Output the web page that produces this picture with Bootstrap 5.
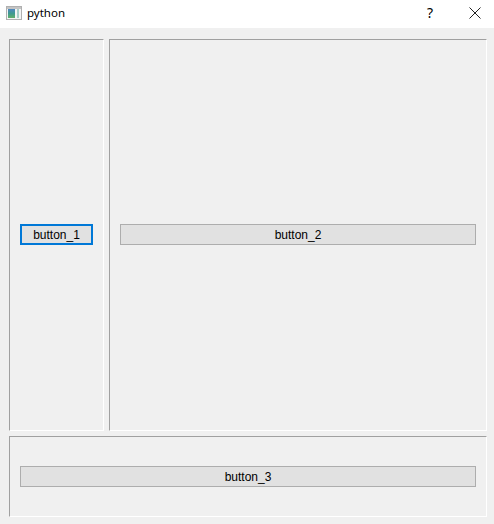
<!DOCTYPE html>
<html lang="en">
<head>
    <meta charset="UTF-8">
    <meta name="viewport" content="width=device-width, initial-scale=1.0">
    <title>python</title>
    <link href="https://cdn.jsdelivr.net/npm/bootstrap@5.3.0/dist/css/bootstrap.min.css" rel="stylesheet">
    <style>
        body { background: #f0f0f0; height: 524px; overflow: hidden; font-family: "Liberation Sans", Arial, sans-serif; }
        .title-bar { height: 28px; background: #fff; padding-left: 6px; }
        .title-text { font-family: "Noto Sans", sans-serif; font-size: 11.5px; color: #000; margin-left: 5px; line-height: 16px; margin-bottom: 2px; }
        .title-help { width: 46px; font-family: "Noto Sans", sans-serif; font-size: 14px; line-height: 16px; color: #000; margin-right: 3px; margin-bottom: 3px; }
        .title-close { width: 38px; margin-bottom: 2px; }
        .title-icon { margin-bottom: 2px; }
        .work-area { padding: 11px 7px 7px 9px; gap: 5px; height: 496px; }
        .top-row { height: 392px; gap: 5px; }
        .top-row .win-btn { margin-bottom: 1px; }
        .pane { border: 1px solid; border-color: #a0a0a0 #fff #fff #a0a0a0; padding: 0 10px; }
        .pane-left { width: 95px; }
        .pane-bottom { height: 81px; }
        .win-btn { height: 21px; padding: 0; background: #e1e1e1; border: 1px solid #adadad; border-radius: 0; font-size: 12px; line-height: 18px; color: #000; }
        .win-btn.is-focus { border: 2px solid #0078d7; padding-top: 1px; line-height: 16px; }
    </style>
</head>
<body>
<div class="title-bar d-flex align-items-center">
    <svg class="title-icon" width="16" height="16" viewBox="0 0 16 16">
        <defs>
            <linearGradient id="iconFill" x1="0" y1="0" x2="0" y2="1">
                <stop offset="0" stop-color="#4f86c0"/>
                <stop offset="0.5" stop-color="#3f9a90"/>
                <stop offset="1" stop-color="#63b06a"/>
            </linearGradient>
        </defs>
        <rect x="0.5" y="1.5" width="15" height="13" fill="#f4f4f4" stroke="#b0b0b0"/>
        <rect x="1" y="2" width="14" height="2" fill="#c4c4c4"/>
        <rect x="2" y="4" width="7" height="9" fill="url(#iconFill)"/>
        <rect x="11" y="4" width="2" height="9" fill="#a9cfc8"/>
    </svg>
    <span class="title-text">python</span>
    <span class="title-help ms-auto text-center">?</span>
    <span class="title-close d-flex justify-content-center">
        <svg width="12" height="12" viewBox="0 0 12 12"><path d="M0.5 0.5L11.5 11.5M11.5 0.5L0.5 11.5" stroke="#222" stroke-width="1" fill="none"/></svg>
    </span>
</div>
<div class="work-area d-flex flex-column">
    <div class="top-row d-flex">
        <div class="pane pane-left d-flex align-items-center">
            <button type="button" class="btn win-btn is-focus w-100">button_1</button>
        </div>
        <div class="pane flex-grow-1 d-flex align-items-center">
            <button type="button" class="btn win-btn w-100">button_2</button>
        </div>
    </div>
    <div class="pane pane-bottom d-flex align-items-center">
        <button type="button" class="btn win-btn w-100">button_3</button>
    </div>
</div>
<script src="https://cdn.jsdelivr.net/npm/bootstrap@5.3.0/dist/js/bootstrap.bundle.min.js"></script>
</body>
</html>
